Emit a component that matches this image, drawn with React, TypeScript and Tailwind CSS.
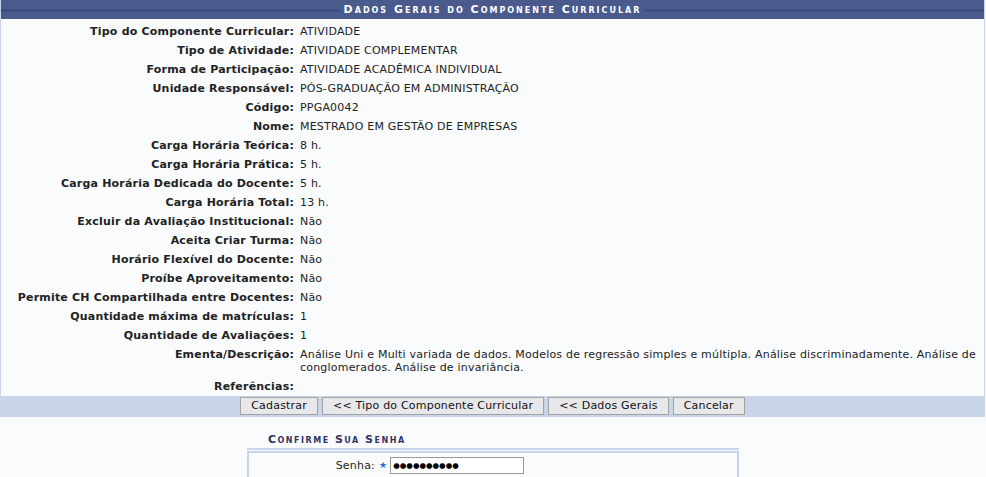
const rows: [string, string][] = [
  ["Tipo do Componente Curricular:", "ATIVIDADE"],
  ["Tipo de Atividade:", "ATIVIDADE COMPLEMENTAR"],
  ["Forma de Participação:", "ATIVIDADE ACADÊMICA INDIVIDUAL"],
  ["Unidade Responsável:", "PÓS-GRADUAÇÃO EM ADMINISTRAÇÃO"],
  ["Código:", "PPGA0042"],
  ["Nome:", "MESTRADO EM GESTÃO DE EMPRESAS"],
  ["Carga Horária Teórica:", "8 h."],
  ["Carga Horária Prática:", "5 h."],
  ["Carga Horária Dedicada do Docente:", "5 h."],
  ["Carga Horária Total:", "13 h."],
  ["Excluir da Avaliação Institucional:", "Não"],
  ["Aceita Criar Turma:", "Não"],
  ["Horário Flexível do Docente:", "Não"],
  ["Proíbe Aproveitamento:", "Não"],
  ["Permite CH Compartilhada entre Docentes:", "Não"],
  ["Quantidade máxima de matrículas:", "1"],
  ["Quantidade de Avaliações:", "1"],
  [
    "Ementa/Descrição:",
    "Análise Uni e Multi variada de dados. Modelos de regressão simples e múltipla. Análise discriminadamente. Análise de conglomerados. Análise de invariância.",
  ],
  ["Referências:", ""],
];

const buttons = ["Cadastrar", "<< Tipo do Componente Curricular", "<< Dados Gerais", "Cancelar"];

export default function App() {
  return (
    <div
      className="h-[477px] w-[986px] overflow-hidden bg-[#f9fbfd] text-[11px] leading-[13px] tracking-[0.2px] text-[#222]"
      style={{ fontFamily: "Verdana, 'DejaVu Sans', sans-serif" }}
    >
      <div className="w-[985px] border border-t-0 border-[#c8d4ea]">
        <div className="relative flex h-[19px] items-center justify-center bg-[#4a5a8d]">
          <div className="absolute inset-x-0 top-[9px] h-[3px] bg-[#3f4e7e]" />
          <span className="relative bg-[#4a5a8d] px-1 font-bold tracking-[2px] text-white [font-variant:small-caps]">
            Dados Gerais do Componente Curricular
          </span>
        </div>
        <div className="pt-[3px]">
          {rows.map(([label, value]) => (
            <div key={label} className="flex py-[3px]">
              <div className="w-[293px] shrink-0 text-right font-bold">{label}</div>
              <div className="flex-1 pl-[6px] pr-[3px]">{value}</div>
            </div>
          ))}
        </div>
        <div className="flex h-[20px] items-center justify-center gap-[4px] bg-[#c8d4e8]">
          {buttons.map((b) => (
            <button
              key={b}
              className="h-[18px] border border-[#a3a3a3] bg-[#e8e8ea] px-[10px] text-[11px] leading-[14px] tracking-[0.2px] text-[#111]"
            >
              {b}
            </button>
          ))}
        </div>
      </div>
      <div className="ml-[247px] mt-[16px] w-[492px]">
        <div className="pl-[21px] text-[11px] font-bold tracking-[1.5px] text-[#333366] [font-variant:small-caps]">
          Confirme Sua Senha
        </div>
        <div className="mt-[2px] border-t-2 border-[#c8d4ea]">
          <div className="mt-[1px] flex h-[28px] items-center border-2 border-[#c8d4ea]">
            <div className="w-[126px] text-right">Senha:</div>
            <span className="ml-[4px] text-[9px] text-[#3366cc]">★</span>
            <div className="ml-[3px] flex h-[17px] w-[134px] items-center border border-[#999] bg-white pl-[2px] text-[7.5px] tracking-[0px] text-black">
              ●●●●●●●●●●
            </div>
          </div>
        </div>
      </div>
    </div>
  );
}
